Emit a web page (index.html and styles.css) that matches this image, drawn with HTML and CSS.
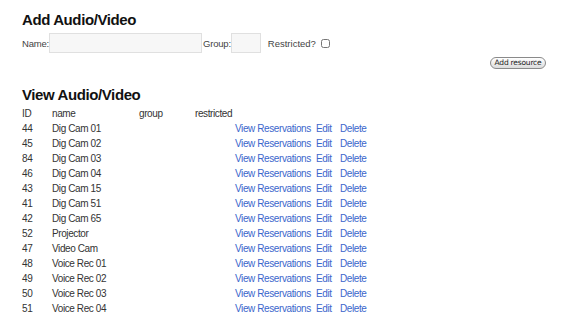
FILE: index.html
```html
<!DOCTYPE html>
<html>
<head>
    <title>Audio/Video</title>
    <meta charset="utf-8">
    <link rel="stylesheet" href="styles.css">
</head>
<body>
    <div class="page">
        <h2 class="title">Add Audio/Video</h2>
        <form class="addform">
            <div class="fields">
                <label>Name:</label><input type="text" class="name-input">
                <label class="lbl-group">Group:</label><input type="text" class="group-input">
                <label class="lbl-restricted">Restricted?</label><input type="checkbox" class="check">
            </div>
            <div class="actions">
                <button type="button" class="btn">Add resource</button>
            </div>
        </form>

        <h2 class="title title-view">View Audio/Video</h2>
        <table class="list">
            <tr class="head">
                <td class="c-id">ID</td>
                <td class="c-name">name</td>
                <td class="c-group">group</td>
                <td class="c-restr">restricted</td>
                <td class="c-view"></td>
                <td class="c-edit"></td>
                <td class="c-del"></td>
            </tr>
            <tr><td>44</td><td>Dig Cam 01</td><td></td><td></td><td><a href="#">View Reservations</a></td><td><a href="#">Edit</a></td><td><a href="#">Delete</a></td></tr>
            <tr><td>45</td><td>Dig Cam 02</td><td></td><td></td><td><a href="#">View Reservations</a></td><td><a href="#">Edit</a></td><td><a href="#">Delete</a></td></tr>
            <tr><td>84</td><td>Dig Cam 03</td><td></td><td></td><td><a href="#">View Reservations</a></td><td><a href="#">Edit</a></td><td><a href="#">Delete</a></td></tr>
            <tr><td>46</td><td>Dig Cam 04</td><td></td><td></td><td><a href="#">View Reservations</a></td><td><a href="#">Edit</a></td><td><a href="#">Delete</a></td></tr>
            <tr><td>43</td><td>Dig Cam 15</td><td></td><td></td><td><a href="#">View Reservations</a></td><td><a href="#">Edit</a></td><td><a href="#">Delete</a></td></tr>
            <tr><td>41</td><td>Dig Cam 51</td><td></td><td></td><td><a href="#">View Reservations</a></td><td><a href="#">Edit</a></td><td><a href="#">Delete</a></td></tr>
            <tr><td>42</td><td>Dig Cam 65</td><td></td><td></td><td><a href="#">View Reservations</a></td><td><a href="#">Edit</a></td><td><a href="#">Delete</a></td></tr>
            <tr><td>52</td><td>Projector</td><td></td><td></td><td><a href="#">View Reservations</a></td><td><a href="#">Edit</a></td><td><a href="#">Delete</a></td></tr>
            <tr><td>47</td><td>Video Cam</td><td></td><td></td><td><a href="#">View Reservations</a></td><td><a href="#">Edit</a></td><td><a href="#">Delete</a></td></tr>
            <tr><td>48</td><td>Voice Rec 01</td><td></td><td></td><td><a href="#">View Reservations</a></td><td><a href="#">Edit</a></td><td><a href="#">Delete</a></td></tr>
            <tr><td>49</td><td>Voice Rec 02</td><td></td><td></td><td><a href="#">View Reservations</a></td><td><a href="#">Edit</a></td><td><a href="#">Delete</a></td></tr>
            <tr><td>50</td><td>Voice Rec 03</td><td></td><td></td><td><a href="#">View Reservations</a></td><td><a href="#">Edit</a></td><td><a href="#">Delete</a></td></tr>
            <tr><td>51</td><td>Voice Rec 04</td><td></td><td></td><td><a href="#">View Reservations</a></td><td><a href="#">Edit</a></td><td><a href="#">Delete</a></td></tr>
        </table>
    </div>
</body>
</html>
```

FILE: styles.css
```css
html, body {
    height: 100%;
}

body {
    margin: 0;
    background-color: #ffffff;
    color: #333333;
    font-family: "Liberation Sans", Helvetica, Arial, sans-serif;
    font-size: 10px;
    letter-spacing: -0.4px;
    overflow: hidden;
}

.page {
    padding: 10px 22px 0 22px;
}

.title {
    margin: 0;
    font-size: 15px;
    line-height: 20px;
    font-weight: bold;
    letter-spacing: -0.4px;
    color: #111111;
}

.title-view {
    margin-top: 16px;
}

/* add form */
.addform {
    margin: 3px 0 0 0;
}

.fields {
    display: flex;
    align-items: center;
    height: 20px;
    font-size: 9.5px;
    letter-spacing: -0.2px;
}

.fields label {
    color: #444444;
}

.fields input[type=text] {
    box-sizing: border-box;
    height: 20px;
    margin: 0;
    padding: 2px;
    border: 1px solid #e0e0e0;
    background: #f7f7f7;
    font-size: 11px;
}

.name-input {
    width: 153px;
}

.group-input {
    width: 30px;
}

.lbl-group {
    margin-left: 1px;
}

.lbl-restricted {
    margin-left: 7px;
    letter-spacing: 0;
}

.check {
    width: 9px;
    height: 9px;
    margin: 1px 0 0 5px;
}

.actions {
    display: flex;
    justify-content: flex-end;
    margin-top: 4px;
}

.btn {
    width: 56px;
    height: 12px;
    padding: 0;
    border: 1px solid #8a8a8a;
    border-radius: 6px;
    background: linear-gradient(#ffffff, #dcdcdc);
    font-family: "DejaVu Sans", sans-serif;
    font-size: 7.5px;
    letter-spacing: -0.2px;
    line-height: 10px;
    color: #222222;
}

/* listing */
.list {
    margin-top: 1px;
    border-collapse: collapse;
    table-layout: fixed;
}

.list td {
    padding: 0;
    height: 15px;
    line-height: 15px;
    white-space: nowrap;
    vertical-align: middle;
}

.c-id { width: 30px; }
.c-name { width: 87px; }
.c-group { width: 56px; }
.c-restr { width: 40px; }
.c-view { width: 81px; }
.c-edit { width: 24px; }
.c-del { width: 40px; }

.list a {
    color: #3a66cc;
    text-decoration: none;
}
```
